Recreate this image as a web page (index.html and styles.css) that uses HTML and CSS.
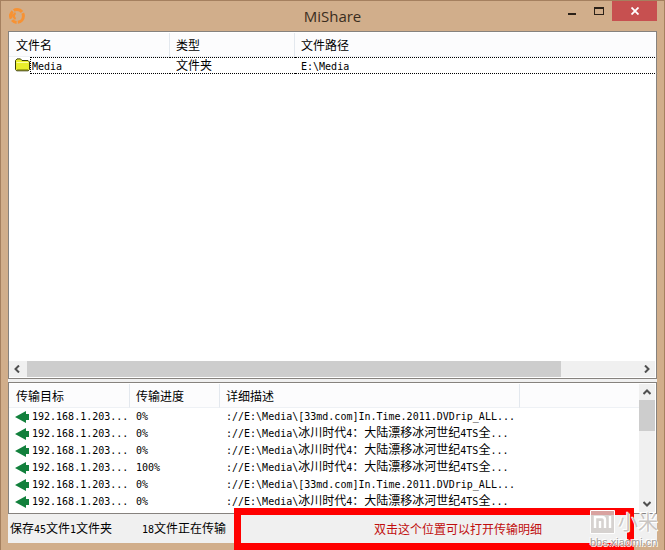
FILE: index.html
```
<!DOCTYPE html>
<html lang="zh-CN">
<head>
    <meta charset="UTF-8">
    <meta name="viewport" content="width=device-width, initial-scale=1.0">
    <title>MiShare</title>
    <link rel="stylesheet" href="styles.css">
</head>
<body>
    <!-- shared shapes -->
    <svg class="defs" width="0" height="0" aria-hidden="true">
        <symbol id="arrow" viewBox="0 0 14 12">
            <path fill="#12803c" d="M0 6 L11 0 V3 H14 V9 H11 V12 Z"/>
        </symbol>
    </svg>

    <div class="window">
        <header class="titlebar">
            <svg class="app-icon" viewBox="0 0 18 18" aria-hidden="true">
                <g fill="none" stroke="#f79233">
                    <circle cx="9" cy="9" r="6.4" stroke-width="3" stroke-dasharray="9 1.2 5 1.6 8 1.2"/>
                    <path stroke-width="2.4" d="M1 8.5 H7 M7.6 6 A3.4 3.4 0 0 0 7.6 12"/>
                </g>
            </svg>
            <h1>MiShare</h1>
            <div class="controls">
                <button type="button" class="control" aria-label="最小化">
                    <svg width="12" height="12" viewBox="0 0 12 12"><path fill="#2b2118" d="M2 8 H10 V10 H2 Z"/></svg>
                </button>
                <button type="button" class="control" aria-label="最大化">
                    <svg width="12" height="12" viewBox="0 0 12 12"><path fill="#2b2118" fill-rule="evenodd" d="M1 2 H11 V10 H1 Z M2 4 V9 H10 V4 Z"/></svg>
                </button>
                <button type="button" class="control close" aria-label="关闭">
                    <svg width="8" height="8" viewBox="0 0 8 8"><path stroke="#fff" stroke-width="1.8" d="M.5 .5 L7.5 7.5 M7.5 .5 L.5 7.5"/></svg>
                </button>
            </div>
        </header>

        <main class="client">
            <section class="pane files">
                <div class="pane-body">
                    <table class="list">
                        <colgroup>
                            <col class="c-icon"><col class="c-name"><col class="c-type"><col>
                        </colgroup>
                        <thead>
                            <tr><th colspan="2">文件名</th><th>类型</th><th class="last">文件路径</th></tr>
                        </thead>
                        <tbody>
                            <tr class="focused">
                                <td class="icon">
                                    <svg width="15" height="14" viewBox="0 0 15 14" aria-hidden="true">
                                        <path fill="#e9ee2c" stroke="#3a3d0c" d="M.5 2.5 L2 .9 H5.5 L7 2.5 H13 L14.5 4 V11.5 L13.2 12.8 H1.6 L.5 11.5 Z"/>
                                        <path stroke="#fbfda0" d="M1.5 4.5 H13.5"/>
                                        <path stroke="#a9ae16" d="M2 11.5 H13"/>
                                    </svg>
                                </td>
                                <td class="name"><span class="half">Media</span></td>
                                <td>文件夹</td>
                                <td><span class="half">E:\Media</span></td>
                            </tr>
                        </tbody>
                    </table>
                </div>
                <div class="scroll-x">
                    <button type="button" aria-label="向左滚动"><svg width="8" height="8" viewBox="0 0 8 8"><path d="M6 .5 L2.5 4 L6 7.5"/></svg></button>
                    <div class="track"><div class="thumb"></div></div>
                    <button type="button" aria-label="向右滚动"><svg width="8" height="8" viewBox="0 0 8 8"><path d="M2 .5 L5.5 4 L2 7.5"/></svg></button>
                </div>
            </section>

            <section class="pane transfers">
                <div class="pane-body">
                    <table class="list">
                        <colgroup>
                            <col class="c-target"><col class="c-progress"><col class="c-detail"><col>
                        </colgroup>
                        <thead>
                            <tr><th>传输目标</th><th>传输进度</th><th>详细描述</th><td class="last"></td></tr>
                        </thead>
                        <tbody>
                            <tr>
                                <td class="target"><svg class="arrow"><use href="#arrow"/></svg><span class="half">192.168.1.203...</span></td>
                                <td><span class="half">0%</span></td>
                                <td colspan="2"><span class="half">://E:\Media\[33md.com]In.Time.2011.DVDrip_ALL...</span></td>
                            </tr>
                            <tr>
                                <td class="target"><svg class="arrow"><use href="#arrow"/></svg><span class="half">192.168.1.203...</span></td>
                                <td><span class="half">0%</span></td>
                                <td colspan="2"><span class="half">://E:\Media\</span>冰川时代<span class="half">4</span>：大陆漂移冰河世纪<span class="half">4TS</span>全<span class="half">...</span></td>
                            </tr>
                            <tr>
                                <td class="target"><svg class="arrow"><use href="#arrow"/></svg><span class="half">192.168.1.203...</span></td>
                                <td><span class="half">0%</span></td>
                                <td colspan="2"><span class="half">://E:\Media\</span>冰川时代<span class="half">4</span>：大陆漂移冰河世纪<span class="half">4TS</span>全<span class="half">...</span></td>
                            </tr>
                            <tr>
                                <td class="target"><svg class="arrow"><use href="#arrow"/></svg><span class="half">192.168.1.203...</span></td>
                                <td><span class="half">100%</span></td>
                                <td colspan="2"><span class="half">://E:\Media\</span>冰川时代<span class="half">4</span>：大陆漂移冰河世纪<span class="half">4TS</span>全<span class="half">...</span></td>
                            </tr>
                            <tr>
                                <td class="target"><svg class="arrow"><use href="#arrow"/></svg><span class="half">192.168.1.203...</span></td>
                                <td><span class="half">0%</span></td>
                                <td colspan="2"><span class="half">://E:\Media\[33md.com]In.Time.2011.DVDrip_ALL...</span></td>
                            </tr>
                            <tr>
                                <td class="target"><svg class="arrow"><use href="#arrow"/></svg><span class="half">192.168.1.203...</span></td>
                                <td><span class="half">0%</span></td>
                                <td colspan="2"><span class="half">://E:\Media\</span>冰川时代<span class="half">4</span>：大陆漂移冰河世纪<span class="half">4TS</span>全<span class="half">...</span></td>
                            </tr>
                        </tbody>
                    </table>
                </div>
                <div class="scroll-y">
                    <button type="button" aria-label="向上滚动"><svg width="8" height="8" viewBox="0 0 8 8"><path d="M.5 6 L4 2.5 L7.5 6"/></svg></button>
                    <div class="track"><div class="thumb"></div></div>
                    <button type="button" aria-label="向下滚动"><svg width="8" height="8" viewBox="0 0 8 8"><path d="M.5 2 L4 5.5 L7.5 2"/></svg></button>
                </div>
            </section>

            <footer class="status">
                <span class="saved">保存<span class="half">45</span>文件<span class="half">1</span>文件夹</span>
                <span class="sending"><span class="half">18</span>文件正在传输</span>
                <span class="hint">双击这个位置可以打开传输明细</span>
            </footer>
        </main>

        <div class="highlight"></div>
        <div class="watermark">
            <div class="brand">
                <svg width="25" height="24" viewBox="0 0 25 24" aria-hidden="true">
                    <path fill="#cfcbc8" fill-opacity=".8" stroke="#fff" d="M.5 .5 H24.5 V23.5 H.5 Z"/>
                    <path fill="none" stroke="#fff" stroke-width="2.4" d="M5 18 V7 H12 Q15 7 15 10 V18 M10 11 V18 M20 6 V18"/>
                </svg>
                <span>小米</span>
            </div>
            <div class="site">bbs.xiaomi.cn</div>
        </div>
    </div>
</body>
</html>
```

FILE: styles.css
```
* {
    box-sizing: border-box;
}
body {
    margin: 0;
    font-family: "Noto Sans CJK SC", sans-serif;
    font-size: 12px;
    line-height: 16px;
    color: #000;
}
button {
    border: none;
    padding: 0;
    background: none;
    display: flex;
    align-items: center;
    justify-content: center;
}
.defs {
    position: absolute;
}
/* half-width characters, two to one full-width glyph */
.half {
    font-family: "DejaVu Sans Mono", monospace;
    font-size: 10px;
}

/* window frame */
.window {
    position: relative;
    display: flex;
    flex-direction: column;
    height: 100vh;
    min-height: 400px;
    overflow: hidden;
    padding: 0 7px 7px;
    background: #d1ae8b;
    border: 1px solid #a5805f;
    border-bottom-width: 0;
}
.titlebar {
    display: grid;
    grid-template-columns: 1fr auto 1fr;
    align-items: center;
    height: 30px;
    flex: none;
}
.app-icon {
    width: 18px;
    height: 18px;
}
.titlebar h1 {
    margin: 0;
    font-family: "Open Sans", sans-serif;
    font-size: 15px;
    font-weight: 400;
    line-height: 28px;
    color: #3a2d20;
}
.controls {
    display: flex;
    justify-content: flex-end;
    align-self: start;
}
.control {
    width: 27px;
    height: 20px;
}
.control.close {
    width: 45px;
    background: #c75050;
}
.client {
    display: flex;
    flex-direction: column;
    flex: 1;
    min-height: 0;
    gap: 3px;
    background: #f0f0f0;
}

/* list panes */
.pane {
    display: flex;
    min-height: 0;
    background: #fff;
    border: 1px solid #86827e;
    padding: 1px;
    padding-left: 0;
}
.files {
    flex: 1;
    flex-direction: column;
}
.transfers {
    flex: none;
    height: 132px;
}
.pane-body {
    flex: 1;
    min-width: 0;
    overflow: hidden;
}
.list {
    width: 100%;
    table-layout: fixed;
    border-collapse: separate;
    border-spacing: 0;
}
.list th,
.list td {
    padding: 0 6px;
    font-weight: 400;
    text-align: left;
    white-space: nowrap;
    vertical-align: middle;
}
.list thead th,
.list thead td {
    height: 24px;
    background: #fcfcfd;
    border-right: 1px solid #e3e8ee;
    border-bottom: 1px solid #eef1f5;
}
.list thead .last {
    border-right: none;
}
.list thead th:first-child {
    padding-left: 7px;
}
.list tbody td {
    height: 17px;
    line-height: 13px;
    vertical-align: top;
}
.c-icon {
    width: 21px;
}
.c-name {
    width: 140px;
}
.c-type {
    width: 125px;
}
.c-target {
    width: 121px;
}
.c-progress {
    width: 90px;
}
.c-detail {
    width: 300px;
}
.focused td {
    border-top: 1px dotted #000;
    border-bottom: 1px dotted #000;
}
.focused .icon {
    border: none;
    padding: 1px 0 0 6px;
}
.focused .name {
    border-left: 1px dotted #000;
    padding-left: 1px;
}
.icon svg {
    display: block;
}
.list .target {
    padding: 0 0 0 6px;
}
.arrow {
    width: 14px;
    height: 12px;
    margin-right: 3px;
    vertical-align: middle;
}

/* scroll bars */
.scroll-x,
.scroll-y {
    display: flex;
    flex: none;
    background: #f0f0f0;
}
.scroll-x {
    height: 16px;
}
.scroll-y {
    width: 16px;
    flex-direction: column;
}
.scroll-x button,
.scroll-y button {
    width: 16px;
    height: 16px;
    flex: none;
}
.scroll-x path,
.scroll-y path {
    fill: none;
    stroke: #505050;
    stroke-width: 2;
}
.track {
    flex: 1;
}
.thumb {
    background: #cdcdcd;
}
.scroll-x .thumb {
    width: 87%;
    height: 100%;
    margin-left: 2px;
}
.scroll-y .thumb {
    height: 32%;
}

/* status bar */
.status {
    display: flex;
    align-items: center;
    height: 29px;
    margin-top: -3px;
    padding-left: 2px;
}
.saved {
    width: 132px;
}
.sending {
    width: 99px;
}
.hint {
    flex: 1;
    padding-left: 18px;
    text-align: center;
    color: #c00d0d;
}

/* overlays */
.highlight {
    position: absolute;
    left: 233px;
    right: 30px;
    bottom: 0;
    height: 42px;
    border: 7px solid #f00;
}
.watermark {
    position: absolute;
    right: 6px;
    bottom: 2px;
    color: #c9c5c2;
    text-shadow: 0 0 1px #fff, 1px 1px 0 #fff, -1px -1px 0 #fff;
}
.brand {
    display: flex;
    align-items: center;
    gap: 3px;
    font-size: 20px;
    line-height: 22px;
}
.site {
    margin-top: 2px;
    font-family: "Liberation Sans", sans-serif;
    font-size: 11px;
    line-height: 12px;
    color: #a09a96;
}
```
